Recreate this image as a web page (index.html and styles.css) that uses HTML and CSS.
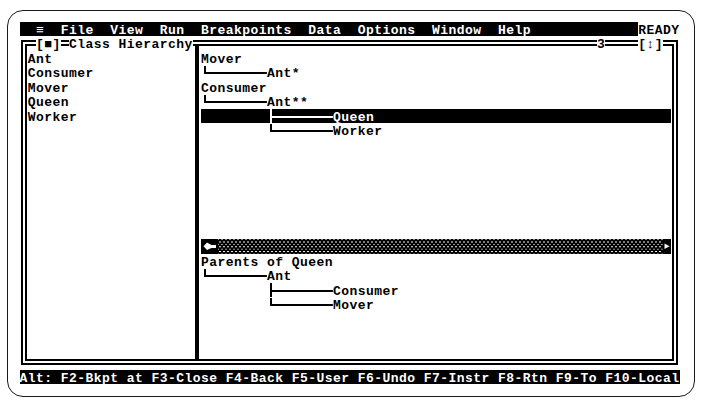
FILE: index.html
```html
<!DOCTYPE html>
<html>
<head>
<meta charset="utf-8">
<title>Class Hierarchy</title>
<link rel="stylesheet" href="styles.css">
</head>
<body>
<div class="monitor">
  <div class="screen">
    <div class="row menubar">
      <div class="menu">  ≡  File  View  Run  Breakpoints  Data  Options  Window  Help</div>
      <div class="ready">READY</div>
    </div>

    <div class="window">
      <div class="row titlebar">
        <span class="sp2"></span><span class="tt">[■]</span><span class="sp1"></span><span class="tt">Class Hierarchy</span><span class="fill"></span><span class="tt">3</span><span class="sp4"></span><span class="tt">[↕]</span><span class="sp2"></span>
      </div>

      <div class="body">
        <div class="pane left">
          <div class="row">Ant</div>
          <div class="row">Consumer</div>
          <div class="row">Mover</div>
          <div class="row">Queen</div>
          <div class="row">Worker</div>
        </div>

        <div class="divider"></div>

        <div class="pane right">
          <div class="tree upper">
            <div class="row">Mover</div>
            <div class="row"><span class="conn elbow"></span>Ant*</div>
            <div class="row">Consumer</div>
            <div class="row"><span class="conn elbow"></span>Ant**</div>
            <div class="row hl"><span class="indent"></span><span class="conn tee"></span>Queen</div>
            <div class="row"><span class="indent"></span><span class="conn elbow"></span>Worker</div>
          </div>

          <div class="hscroll">
            <div class="sb-left">
              <svg width="16.5" height="14.5" viewBox="0 0 16.5 14.5"><path d="M6 3.5 L10.5 6 L15 6 L15 9 L10.5 9 L6 11 L2.5 7.25 Z" fill="#fff"/></svg>
            </div>
            <div class="sb-track"></div>
            <div class="sb-right">
              <svg width="8.25" height="14.5" viewBox="0 0 8.25 14.5"><path d="M1.5 4.5 L6.5 7.25 L1.5 10 Z" fill="#fff"/></svg>
            </div>
          </div>

          <div class="tree lower">
            <div class="row">Parents of Queen</div>
            <div class="row"><span class="conn elbow"></span>Ant</div>
            <div class="row"><span class="indent"></span><span class="conn tee"></span>Consumer</div>
            <div class="row"><span class="indent"></span><span class="conn elbow"></span>Mover</div>
          </div>
        </div>
      </div>
    </div>

    <div class="row status">Alt: F2-Bkpt at F3-Close F4-Back F5-User F6-Undo F7-Instr F8-Rtn F9-To F10-Local</div>
  </div>
</div>
</body>
</html>
```

FILE: styles.css
```css
:root {
  --cw: 8.25px;
  --rh: 14.5px;
}

html, body {
  margin: 0;
  padding: 0;
  background: #fff;
}

.monitor {
  box-sizing: border-box;
  width: 688px;
  height: 387px;
  margin: 10px 0 0 7px;
  border: 1.5px solid #1a1a1a;
  border-radius: 16px;
  padding: 10.5px 0 0 11.5px;
}

.screen {
  width: 660px;
  height: 362.5px;
  font-family: "Liberation Mono", "DejaVu Sans Mono", monospace;
  font-size: 13px;
  font-weight: bold;
  letter-spacing: 0.45px;
  color: #000;
}

.row {
  height: var(--rh);
  line-height: 17.5px;
  white-space: pre;
}

/* Menu bar */
.menubar {
  display: flex;
}
.menu {
  width: calc(var(--cw) * 75);
  background: #000;
  color: #fff;
}
.ready {
  flex: 1;
}

/* Window */
.window {
  box-sizing: border-box;
  width: 657.75px;
  height: 325px;
  margin: 4.25px 1.125px;
  border: 6px double #000;
  padding: 0 1.125px;
}

.titlebar {
  display: flex;
  margin: -10.25px calc(var(--cw) * -1) 0;
}
.titlebar .tt {
  background: #fff;
}
.sp1 { width: var(--cw); }
.sp2 { width: calc(var(--cw) * 2); }
.sp4 { width: calc(var(--cw) * 4); }
.fill { flex: 1; }

.body {
  display: flex;
  height: 313px;
  margin-top: -4.25px;
}

.pane {
  box-sizing: border-box;
  padding-top: 4.25px;
}
.pane.left {
  width: calc(var(--cw) * 20);
}
.pane.right {
  flex: 1;
}

.divider {
  width: var(--cw);
  background: linear-gradient(#000, #000) center / 4px 100% no-repeat;
}

.tree.upper {
  height: calc(var(--rh) * 13);
}

.hl {
  background: #000;
  color: #fff;
}

.indent,
.conn {
  display: inline-block;
  vertical-align: top;
  width: calc(var(--cw) * 8);
  height: var(--rh);
}

.conn.elbow {
  background:
    linear-gradient(currentColor, currentColor) 3.1px 1px / 2px 8px no-repeat,
    linear-gradient(currentColor, currentColor) 3.1px 7px / calc(100% - 3.1px) 2px no-repeat;
}
.conn.tee {
  background:
    linear-gradient(currentColor, currentColor) 3.1px 0 / 2px 100% no-repeat,
    linear-gradient(currentColor, currentColor) 3.1px 7px / calc(100% - 3.1px) 2px no-repeat;
}

/* Horizontal scroll bar */
.hscroll {
  display: flex;
  height: var(--rh);
}
.hscroll svg {
  display: block;
}
.sb-left {
  width: calc(var(--cw) * 2);
  background: #000;
}
.sb-track {
  flex: 1;
  background-color: #000;
  background-image:
    radial-gradient(circle, #fff 0.5px, transparent 1px),
    radial-gradient(circle, #ccc 0.4px, transparent 0.9px);
  background-size: 4px 4.8px, 4px 4.8px;
  background-position: 0 0.6px, 2px 3px;
}
.sb-right {
  width: var(--cw);
  background: #000;
}

/* Status line */
.status {
  background: #000;
  color: #fff;
}
```
